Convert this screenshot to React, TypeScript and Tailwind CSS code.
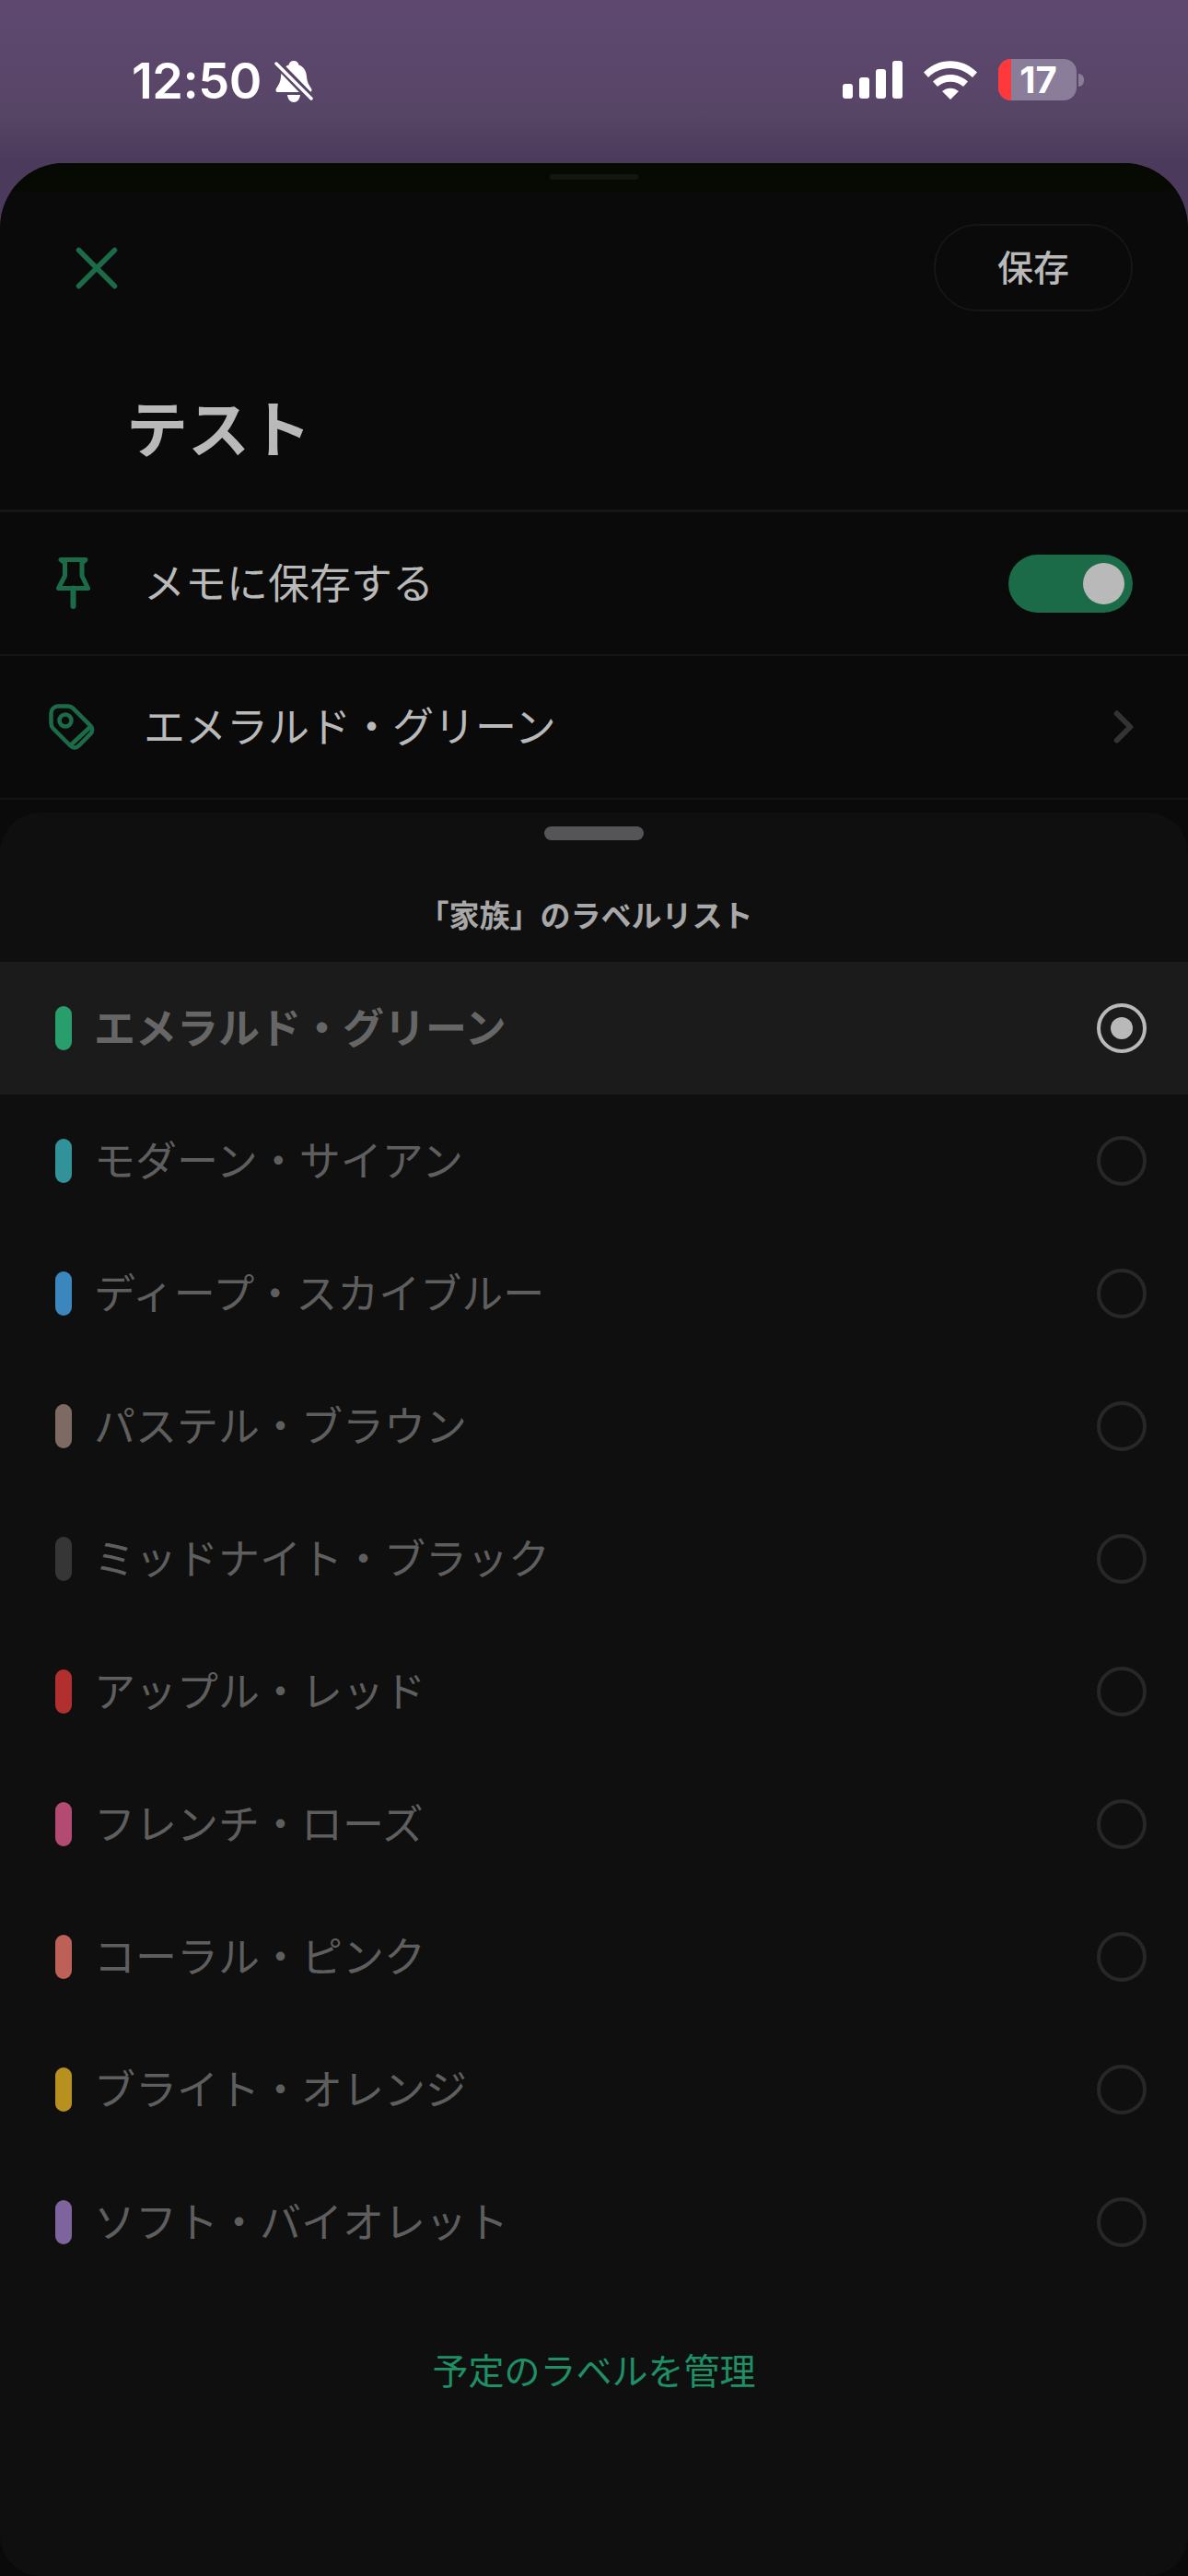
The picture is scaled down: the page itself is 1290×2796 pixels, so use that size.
import React from "react";
import { X, ChevronRight } from "lucide-react";

const cjk = "font-['Inter','Noto_Sans_CJK_JP',sans-serif]";

interface LabelItem {
  name: string;
  color: string;
}

const labels: LabelItem[] = [
  { name: "エメラルド・グリーン", color: "#279e6c" },
  { name: "モダーン・サイアン", color: "#32929a" },
  { name: "ディープ・スカイブルー", color: "#3a86bd" },
  { name: "パステル・ブラウン", color: "#7d6a62" },
  { name: "ミッドナイト・ブラック", color: "#363636" },
  { name: "アップル・レッド", color: "#b12f2f" },
  { name: "フレンチ・ローズ", color: "#b24a72" },
  { name: "コーラル・ピンク", color: "#bd6058" },
  { name: "ブライト・オレンジ", color: "#b8901f" },
  { name: "ソフト・バイオレット", color: "#7d649c" },
];

const StatusBar: React.FC = () => (
  <div className="h-[177px] w-full bg-gradient-to-b from-[#5e4870] via-[#574566] via-70% to-[#4b3a5b] pl-[143px] pr-[113px] pt-[60px]">
    <div className="flex items-start justify-between">
      <div className="flex items-center gap-[14px]">
        <span className="text-[54px] leading-[56px] font-semibold tracking-[-0.5px] text-white font-['Inter',sans-serif]">
          12:50
        </span>
        <svg width="42" height="46" viewBox="0 0 42 46" className="mt-[2px]">
          <path
            d="M21 0c3 0 5 2 5.500 4.500C32 6.500 34.500 11 35 17c.4 5 1.500 8 5 13 1 2 .5 4-2 4H4c-2.500 0-3-2-2-4 3.500-5 4.600-8 5-13 .5-6 3-10.500 8.500-12.500C16 2 18 0 21 0z"
            fill="#fff"
          />
          <path d="M14 37h14c-.5 5-3.500 8-7 8s-6.500-3-7-8z" fill="#fff" />
          <path d="M3 3l35 36" stroke="#574566" strokeWidth="9" />
          <path d="M2 3l38 38" stroke="#fff" strokeWidth="3.500" strokeLinecap="round" />
        </svg>
      </div>
      <div className="flex items-center pt-[4px]">
        <div className="flex items-end gap-[7px] h-[41px]">
          <div className="w-[11px] h-[16px] rounded-[3px] bg-white" />
          <div className="w-[11px] h-[23px] rounded-[3px] bg-white" />
          <div className="w-[11px] h-[32px] rounded-[3px] bg-white" />
          <div className="w-[11px] h-[41px] rounded-[3px] bg-white" />
        </div>
        <svg width="58" height="42" viewBox="0 0 58 42" className="ml-[23px]">
          <path d="M0 12.500C16-4 42-4 58 12.500l-5 5.500C39 4.500 19 4.500 5 18z" fill="#fff" />
          <path d="M10 22.500c11-10 27-10 38 0l-5 5.500c-8-7-20-7-28 0z" fill="#fff" />
          <path d="M20 33c5.500-4.500 12.500-4.500 18 0L29 42z" fill="#fff" />
        </svg>
        <div className="ml-[23px] flex items-center">
          <div className="relative h-[45px] w-[85px]">
            <div className="h-full w-full overflow-hidden rounded-[14px] bg-[#8a7d99]">
              <div className="h-full w-[14px] bg-[#ff383c]" />
            </div>
            <span className="absolute inset-0 pl-[2px] flex items-center justify-center text-[40px] leading-none font-bold text-white font-['Inter',sans-serif]">
              17
            </span>
          </div>
          <div className="ml-[2px] h-[14px] w-[6px] rounded-r-full bg-[#8a7d99]" />
        </div>
      </div>
    </div>
  </div>
);

const PinIcon: React.FC = () => (
  <svg width="37" height="56" viewBox="0 0 37 56" fill="none" stroke="#1b6b49" strokeWidth="5" strokeLinecap="round" strokeLinejoin="round">
    <path d="M5 2.500H32L28 6V20L34.500 33.500H2.500L9.500 20V6Z" />
    <path d="M18.500 33.500V53" strokeWidth="6" />
  </svg>
);

const TagIcon: React.FC = () => (
  <svg width="50" height="50" viewBox="0 0 50 50" fill="none" stroke="#1b6b49" strokeWidth="4.500">
    <path
      d="M10 2.500h11c2 0 3.800.8 5.200 2.200l19 19c2.500 2.500 2.500 6.500 0 9L32.500 45.500c-2.500 2.500-6.500 2.500-9 0l-19-19C3 25 2.500 23 2.500 21V10c0-4 3.500-7.500 7.500-7.500z"
      strokeLinejoin="round"
    />
    <circle cx="18" cy="18" r="6.500" />
    <path d="M45 25L24 44.500" />
  </svg>
);

const App: React.FC = () => {
  return (
    <div className={`flex h-[2796px] w-[1290px] flex-col overflow-hidden bg-[#4b3a5b] ${cjk}`}>
      <StatusBar />

      {/* Back sheet, dimmed */}
      <div className="flex flex-1 flex-col overflow-hidden rounded-t-[70px] bg-[#0a0a0a]">
        <div className="flex h-[30px] justify-center bg-[#070a03] pt-[12px]">
          <div className="h-[6px] w-[96px] rounded-[3px] bg-[#141612]" />
        </div>

        <div className="flex items-center justify-between pl-[66px] pr-[60px] pt-[36px]">
          <X size={78} strokeWidth={5.5} absoluteStrokeWidth color="#1b6b49" />
          <button className="flex h-[95px] w-[216px] items-center justify-center rounded-full border-2 border-[#161616] text-[39px] leading-none font-medium text-[#b9b9b9]">
            保存
          </button>
        </div>

        <div className="h-[218px] border-b-[3px] border-[#161616] pl-[137px] pt-[95px]">
          <span className="block text-[67px] leading-none font-bold text-[#b9b9b9]">テスト</span>
        </div>

        <div className="flex h-[156px] items-center border-b-2 border-[#151515] pr-[60px]">
          <div className="w-[156px] pl-[61px]">
            <PinIcon />
          </div>
          <span className="flex-1 text-[45px] leading-none text-[#b9b9b9]">メモに保存する</span>
          <div className="flex h-[63px] w-[135px] items-center justify-end rounded-full bg-[#1b6b49] pr-[9px]">
            <div className="h-[45px] w-[45px] rounded-full bg-[#b9b9b9]" />
          </div>
        </div>

        <div className="flex h-[156px] items-center border-b-2 border-[#151515] pr-[41px]">
          <div className="w-[156px] pl-[53px]">
            <TagIcon />
          </div>
          <span className="flex-1 text-[45px] leading-none text-[#b9b9b9]">エメラルド・グリーン</span>
          <ChevronRight size={58} strokeWidth={6} absoluteStrokeWidth color="#333333" />
        </div>

        {/* Label picker */}
        <div className="mt-[14px] flex flex-1 flex-col rounded-[44px] bg-[#0f0f0f]">
          <div className="flex justify-center pt-[15px]">
            <div className="h-[15px] w-[108px] rounded-full bg-[#555558]" />
          </div>
          <div className="flex h-[132px] items-center justify-center pt-[32px] pr-[18px] text-[33px] leading-none font-semibold text-[#a8a8a8]">
            「家族」のラベルリスト
          </div>

          <div className="flex flex-col">
            {labels.map((label, i) => (
              <div
                key={label.name}
                className={`flex h-[144px] items-center pl-[60px] pr-[45px] ${i === 0 ? "bg-[#1b1b1b]" : ""}`}
              >
                <div className="h-[48px] w-[18px] rounded-full" style={{ backgroundColor: label.color }} />
                <span
                  className={`ml-[24px] flex-1 text-[45px] leading-none ${
                    i === 0 ? "font-semibold text-[#666666]" : "text-[#5e5e5e]"
                  }`}
                >
                  {label.name}
                </span>
                {i === 0 ? (
                  <div className="flex h-[54px] w-[54px] items-center justify-center rounded-full border-[4px] border-[#b9b9b9]">
                    <div className="h-[24px] w-[24px] rounded-full bg-[#b9b9b9]" />
                  </div>
                ) : (
                  <div className="h-[54px] w-[54px] rounded-full border-[4px] border-[#272727]" />
                )}
              </div>
            ))}
          </div>

          <div className="pt-[70px] text-center text-[39px] leading-[40px] text-[#1f9066]">
            予定のラベルを管理
          </div>
        </div>
      </div>
    </div>
  );
};

export default App;
